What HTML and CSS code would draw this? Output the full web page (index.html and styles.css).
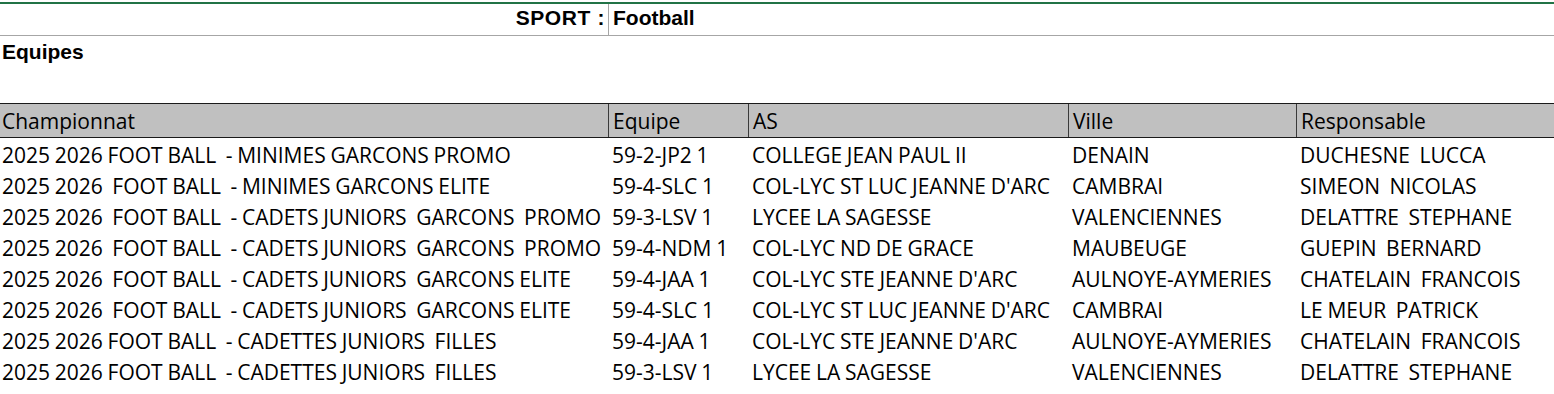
FILE: index.html
```html
<!DOCTYPE html>
<html lang="fr">
<head>
<meta charset="utf-8">
<title>Equipes - Football</title>
<link rel="stylesheet" href="styles.css">
</head>
<body>
<div class="sheet">
  <div class="sport-row">
    <div class="sport-label">SPORT :</div>
    <div class="sport-value">Football</div>
  </div>
  <div class="section-title">Equipes</div>
  <div class="spacer"></div>
  <div class="table">
    <div class="row head">
      <div class="c">Championnat</div>
      <div class="c">Equipe</div>
      <div class="c">AS</div>
      <div class="c">Ville</div>
      <div class="c">Responsable</div>
    </div>
    <div class="row">
      <div class="c">2025 2026 FOOT BALL  - MINIMES GARCONS PROMO</div>
      <div class="c">59-2-JP2 1</div>
      <div class="c">COLLEGE JEAN PAUL II</div>
      <div class="c">DENAIN</div>
      <div class="c">DUCHESNE  LUCCA</div>
    </div>
    <div class="row">
      <div class="c">2025 2026  FOOT BALL  - MINIMES GARCONS ELITE</div>
      <div class="c">59-4-SLC 1</div>
      <div class="c">COL-LYC ST LUC JEANNE D'ARC</div>
      <div class="c">CAMBRAI</div>
      <div class="c">SIMEON  NICOLAS</div>
    </div>
    <div class="row">
      <div class="c">2025 2026  FOOT BALL  - CADETS JUNIORS  GARCONS  PROMO</div>
      <div class="c">59-3-LSV 1</div>
      <div class="c">LYCEE LA SAGESSE</div>
      <div class="c">VALENCIENNES</div>
      <div class="c">DELATTRE  STEPHANE</div>
    </div>
    <div class="row">
      <div class="c">2025 2026  FOOT BALL  - CADETS JUNIORS  GARCONS  PROMO</div>
      <div class="c">59-4-NDM 1</div>
      <div class="c">COL-LYC ND DE GRACE</div>
      <div class="c">MAUBEUGE</div>
      <div class="c">GUEPIN  BERNARD</div>
    </div>
    <div class="row">
      <div class="c">2025 2026  FOOT BALL  - CADETS JUNIORS  GARCONS ELITE</div>
      <div class="c">59-4-JAA 1</div>
      <div class="c">COL-LYC STE JEANNE D'ARC</div>
      <div class="c">AULNOYE-AYMERIES</div>
      <div class="c">CHATELAIN  FRANCOIS</div>
    </div>
    <div class="row">
      <div class="c">2025 2026  FOOT BALL  - CADETS JUNIORS  GARCONS ELITE</div>
      <div class="c">59-4-SLC 1</div>
      <div class="c">COL-LYC ST LUC JEANNE D'ARC</div>
      <div class="c">CAMBRAI</div>
      <div class="c">LE MEUR  PATRICK</div>
    </div>
    <div class="row">
      <div class="c">2025 2026 FOOT BALL  - CADETTES JUNIORS  FILLES</div>
      <div class="c">59-4-JAA 1</div>
      <div class="c">COL-LYC STE JEANNE D'ARC</div>
      <div class="c">AULNOYE-AYMERIES</div>
      <div class="c">CHATELAIN  FRANCOIS</div>
    </div>
    <div class="row">
      <div class="c">2025 2026 FOOT BALL  - CADETTES JUNIORS  FILLES</div>
      <div class="c">59-3-LSV 1</div>
      <div class="c">LYCEE LA SAGESSE</div>
      <div class="c">VALENCIENNES</div>
      <div class="c">DELATTRE  STEPHANE</div>
    </div>
  </div>
</div>
</body>
</html>
```
FILE: styles.css
```css
html, body {
  margin: 0;
  padding: 0;
  background: #ffffff;
}
.sheet {
  padding-top: 2px;
  color: #000;
}
.sport-row {
  display: grid;
  grid-template-columns: 608px 1fr;
  height: 31px;
  border-top: 2px solid #217346;
  border-bottom: 1px solid #a6a6a6;
  font-family: "Liberation Sans", Arial, sans-serif;
  font-weight: bold;
  font-size: 21px;
}
.sport-label {
  text-align: right;
  padding-right: 3px;
  line-height: 28px;
  letter-spacing: 0.6px;
}
.sport-value {
  border-left: 1px solid #a6a6a6;
  padding-left: 4px;
  line-height: 28px;
}
.section-title {
  height: 31px;
  padding-left: 2px;
  font-family: "Liberation Sans", Arial, sans-serif;
  font-weight: bold;
  font-size: 21px;
  line-height: 31px;
}
.spacer {
  height: 36px;
}
.table {
  font-family: "Open Sans", sans-serif;
  font-size: 21px;
  word-spacing: -0.7px;
}
.row {
  display: grid;
  grid-template-columns: 608px 140px 320px 228px 1fr;
  height: 31px;
  align-items: center;
  white-space: pre;
}
.row .c {
  padding-left: 2px;
  padding-top: 3px;
  min-width: 0;
}
.row .c + .c {
  padding-left: 4px;
}
.row.head {
  height: 33px;
  background: #c0c0c0;
  border-top: 1px solid #1a1a1a;
  border-bottom: 1px solid #1a1a1a;
  align-items: stretch;
}
.row.head .c {
  display: flex;
  align-items: center;
  padding-top: 1px;
}
.row.head .c + .c {
  border-left: 1px solid #3a3a3a;
}
```
